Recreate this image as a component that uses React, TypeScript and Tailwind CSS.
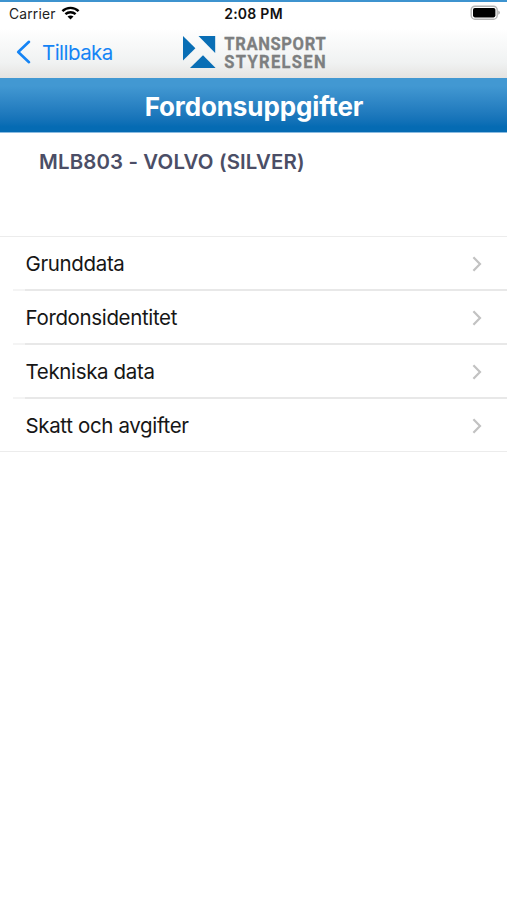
import React from 'react';

const rows = ['Grunddata', 'Fordonsidentitet', 'Tekniska data', 'Skatt och avgifter'];

function StatusBar() {
  return (
    <div className="relative flex h-[24px] items-center justify-between pl-[9px] pr-[6px] text-[13px] leading-[20px] text-[#111111]">
      <div className="flex items-center gap-[5px]">
        <span className="text-[13.8px] tracking-[0.2px] text-[#222222]">Carrier</span>
        <svg width="19" height="14" viewBox="0 0 19 14" fill="none" stroke="#000000" strokeWidth="2.4" className="-mt-[2px]">
          <path d="M1.4 5.2 C5.9 0.8 13.1 0.8 17.6 5.2" />
          <path d="M4.4 8.2 C7.3 5.5 11.7 5.5 14.6 8.2" />
          <path d="M9.5 13.6 L6.5 10.6 C8.2 9.1 10.8 9.1 12.5 10.6 Z" fill="#000000" stroke="none" />
        </svg>
      </div>
      <span className="absolute inset-x-0 text-center text-[14px] font-semibold tracking-[0.25px]">2:08 PM</span>
      <svg width="31" height="16" viewBox="0 0 31 16" className="-mt-[2px]">
        <rect x="1.2" y="1.2" width="26" height="13" rx="3.8" fill="#ffffff" stroke="#b4b4b4" strokeWidth="1.4" />
        <rect x="3" y="3" width="22.4" height="9.4" rx="1.8" fill="#000000" />
        <path d="M28.2 5.6 C30.6 6.4 30.6 9 28.2 9.8 Z" fill="#b4b4b4" />
      </svg>
    </div>
  );
}

function Logo() {
  return (
    <svg width="146" height="42" viewBox="0 -3 146 42" className="ml-[2px] font-[Roboto,sans-serif]">
      <g fill="#096eb5">
        <path d="M1 2 L13.4 14.2 L1 26.4 Z" />
        <path d="M16.5 2 H33.2 V19 Z" />
        <path d="M21 21.2 L33.6 34 H8 Z" />
      </g>
      <g fill="#7d7f80" stroke="#7d7f80" strokeWidth="0.3" fontSize="17.8" fontWeight="700" transform="translate(42.3 0) scale(0.93 1)">
        <text x="0" y="16" textLength="109" lengthAdjust="spacing">TRANSPORT</text>
        <text x="0" y="33.8" textLength="109" lengthAdjust="spacing">STYRELSEN</text>
      </g>
    </svg>
  );
}

function Header() {
  return (
    <header className="flex h-[78px] flex-col border-t-2 border-[#3d93cf] bg-linear-to-b from-white from-35% via-[#f0f2f2] via-80% to-[#e5e3e1]">
      <StatusBar />
      <div className="relative flex h-[52px] items-center justify-center">
        <a href="#" className="absolute left-[16px] top-[13px] flex items-center gap-[10px] text-[#1584f5]">
          <svg width="16" height="26" viewBox="0 0 16 26" fill="none" stroke="currentColor" strokeWidth="2.6" strokeLinecap="round" strokeLinejoin="round">
            <path d="M13 2.8 L2.2 13 L13 23.2" />
          </svg>
          <span className="pt-[2px] text-[20.5px] leading-[24px] tracking-[-0.55px]">Tillbaka</span>
        </a>
        <Logo />
      </div>
    </header>
  );
}

export default function App() {
  return (
    <div className="min-h-[900px] w-full bg-white font-[Inter,sans-serif]">
      <Header />
      <h1 className="flex h-[55px] items-center justify-center border-b border-[#8bbbe0] bg-linear-to-b from-[#4298d2] from-15% to-[#056bb3] to-90% pt-[3px] pl-px text-[26px] leading-[36px] font-bold tracking-[-0.12px] text-white">
        Fordonsuppgifter
      </h1>
      <div className="h-[103px] pl-[39px] pt-[16px]">
        <h2 className="text-[20.4px] leading-[26px] font-semibold tracking-[0.15px] text-[#4b4e66]">MLB803 - VOLVO (SILVER)</h2>
      </div>
      <ul className="border-y border-[#ececec]">
        {rows.map((row, i) => (
          <li key={row} className="pl-[13px]">
            <a href="#" className="flex h-[52px] items-center justify-between pl-[12.5px] pr-[23px] pt-[2px]">
              <span className="text-[20.5px] leading-[26px] tracking-[-0.35px] text-[#161616]">{row}</span>
              <svg width="14" height="18" viewBox="0 0 14 18" fill="none" stroke="#c2c2c2" strokeWidth="2.2" className="-mt-px">
                <path d="M3.4 2.2 L10 9 L3.4 15.8" />
              </svg>
            </a>
            {i < rows.length - 1 && (
              <div className="flex h-[2px]">
                <div className="w-[12px] bg-[#f4f4f4]" />
                <div className="flex-1 bg-[#e8e8e8]" />
              </div>
            )}
          </li>
        ))}
      </ul>
    </div>
  );
}
